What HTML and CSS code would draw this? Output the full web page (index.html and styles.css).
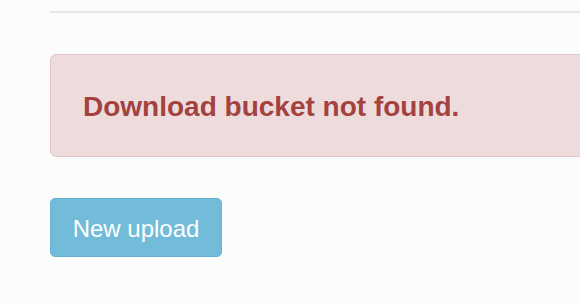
FILE: index.html
```html
<!DOCTYPE html>
<html>
<head>
<meta charset="utf-8">
<link rel="stylesheet" href="styles.css">
</head>
<body>
<div class="page">
  <hr class="rule">
  <div class="alert">
    <h3 class="alert-title">Download bucket not found.</h3>
  </div>
  <a class="btn" href="#">New upload</a>
</div>
</body>
</html>
```
FILE: styles.css
```css
html, body {
  margin: 0;
  padding: 0;
  background: #fcfcfc;
  font-family: "Liberation Sans", Arial, sans-serif;
  overflow: hidden;
}
.page {
  padding: 11px 0 0 50px;
  width: 560px;
}
.rule {
  margin: 0;
  border: 0;
  border-top: 2px solid #e6e6e6;
}
.alert {
  margin-top: 41px;
  height: 103px;
  box-sizing: border-box;
  background: #eedcdd;
  border: 1px solid #e2c7ca;
  border-radius: 6px;
  display: flex;
  align-items: center;
  padding: 2px 32px 0;
}
.alert-title {
  margin: 0;
  font-size: 28px;
  font-weight: bold;
  color: #a3423f;
  line-height: 1;
}
.btn {
  display: inline-flex;
  align-items: center;
  justify-content: center;
  margin-top: 41px;
  width: 172px;
  height: 59px;
  box-sizing: border-box;
  background: #72bbd9;
  border: 1px solid #66b3d3;
  border-radius: 5px;
  color: #fff;
  font-size: 24px;
  padding-top: 2px;
  text-decoration: none;
}
```
